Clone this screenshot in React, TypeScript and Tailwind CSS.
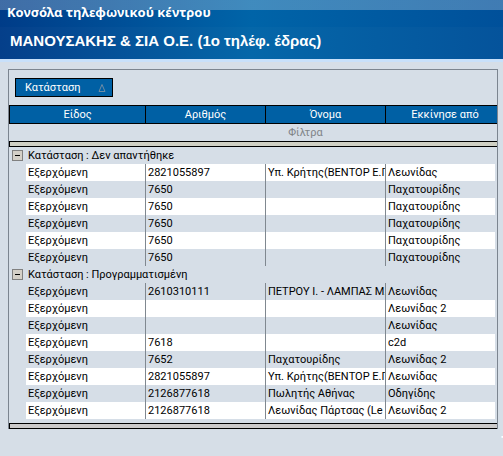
import React, { useState } from 'react'

interface Call {
  type: string;
  number: string;
  name: string;
  startedBy: string;
}

interface CallGroup {
  status: string;
  firstShaded: boolean;
  calls: Call[];
}

const call = (number: string, name: string, startedBy: string): Call => ({
  type: 'Εξερχόμενη',
  number,
  name,
  startedBy,
})

const groups: CallGroup[] = [
  {
    status: 'Δεν απαντήθηκε',
    firstShaded: false,
    calls: [
      call('2821055897', 'Υπ. Κρήτης(ΒΕΝΤΟΡ Ε.Γ', 'Λεωνίδας'),
      call('7650', '', 'Παχατουρίδης'),
      call('7650', '', 'Παχατουρίδης'),
      call('7650', '', 'Παχατουρίδης'),
      call('7650', '', 'Παχατουρίδης'),
      call('7650', '', 'Παχατουρίδης'),
    ],
  },
  {
    status: 'Προγραμματισμένη',
    firstShaded: true,
    calls: [
      call('2610310111', 'ΠΕΤΡΟΥ Ι. - ΛΑΜΠΑΣ Μ.', 'Λεωνίδας'),
      call('', '', 'Λεωνίδας 2'),
      call('', '', 'Λεωνίδας'),
      call('7618', '', 'c2d'),
      call('7652', 'Παχατουρίδης', 'Λεωνίδας 2'),
      call('2821055897', 'Υπ. Κρήτης(ΒΕΝΤΟΡ Ε.Γ', 'Λεωνίδας'),
      call('2126877618', 'Πωλητής Αθήνας', 'Οδηγίδης'),
      call('2126877618', 'Λεωνίδας Πάρτσας (Le', 'Λεωνίδας 2'),
    ],
  },
]

const Header = () => (
  <header className="border-b-3 border-[#c8e0fa] bg-linear-to-r from-[#003c88] via-[#0064a8] to-[#00509a] text-white whitespace-nowrap">
    <div className="h-[27px] bg-linear-to-b from-white/25 from-[10px] to-white/0 to-[10px] px-[7px] pt-1">
      <p className="font-['Noto_Sans',sans-serif] text-[13px] leading-4 font-bold">Κονσόλα τηλεφωνικού κέντρου</p>
    </div>
    <h1 className="h-8 bg-white/2 px-[10px] pt-1 font-['Liberation_Sans',Arial,sans-serif] text-[15px] leading-5 font-bold">ΜΑΝΟΥΣΑΚΗΣ &amp; ΣΙΑ Ο.Ε. (1ο τηλέφ. έδρας)</h1>
  </header>
)

const GroupRows = ({ group }: { group: CallGroup }) => {
  const [open, setOpen] = useState(true)
  return (
    <tbody>
      <tr className="h-[17px]">
        <td className="p-0 pl-[3px]">
          <button
            type="button"
            aria-expanded={open}
            aria-label={group.status}
            onClick={() => setOpen(!open)}
            className="flex size-[11px] items-center justify-center border border-[#808080] bg-[#d4d0c8]"
          >
            <svg viewBox="0 0 9 9" className="size-[9px]" shapeRendering="crispEdges">
              <path d={open ? 'M2 4h5v1H2z' : 'M2 4h5v1H2zM4 2h1v5H4z'} fill="#000" />
            </svg>
          </button>
        </td>
        <td colSpan={4} className="p-0 pl-[2px]">Κατάσταση : {group.status}</td>
      </tr>
      {open && group.calls.map((item, ind) => {
        const shaded = (ind % 2 === 0) === group.firstShaded
        const cell = `h-[17px] p-0 pl-[2px] overflow-hidden ${shaded ? '' : 'bg-white'}`
        return (
          <tr key={ind}>
            <td className="p-0" />
            <td className={`${cell} border-r border-[#808890]`}>{item.type}</td>
            <td className={`${cell} border-r border-[#808890]`}>{item.number}</td>
            <td className={`${cell} border-r border-[#808890]`}>{item.name}</td>
            <td className={`${cell} border-r-2 border-r-[#d6dee7]`}>{item.startedBy}</td>
          </tr>
        )
      })}
    </tbody>
  )
}

const App = () => {
  const head = 'h-[19px] border-y border-r border-black p-0 text-center font-normal'
  return (
    <div className="min-h-screen overflow-hidden bg-[#d6dee7] font-[Roboto,sans-serif] text-[11px] leading-[17px] text-black">
      <Header />
      <main className="mt-[7px] mr-[5px] ml-2 border border-b-0 border-[#7c8590]">
        <div className="px-[6px] pt-2 pb-2">
          <button type="button" className="flex h-[19px] w-[98px] items-center justify-between border border-black bg-[#0060a4] pr-[6px] pl-[9px] text-white">
            Κατάσταση
            <svg viewBox="0 0 8 8" className="size-2" fill="none">
              <path d="M4 .5 1 7.5h6z" stroke="#6f8ca4" />
            </svg>
          </button>
        </div>
        <table className="w-full table-fixed border-separate border-spacing-0 whitespace-nowrap">
          <colgroup>
            <col className="w-[17px]" />
            <col className="w-[120px]" />
            <col className="w-[120px]" />
            <col className="w-[120px]" />
            <col />
          </colgroup>
          <thead>
            <tr className="bg-[#0060a4] text-white">
              <th colSpan={2} className={`${head} border-l`}>Είδος</th>
              <th className={head}>Αριθμός</th>
              <th className={head}>Όνομα</th>
              <th className="h-[19px] border-y border-black p-0 pl-[7px] text-center font-normal">Εκκίνησε από</th>
            </tr>
            <tr>
              <td colSpan={5} className="h-[17px] p-0 pl-[105px] text-center text-[#808488]">Φίλτρα</td>
            </tr>
            <tr>
              <td colSpan={5} className="h-[6px] border-y border-l border-black bg-[#d0d0c4] p-0" />
            </tr>
          </thead>
          {groups.map((group) => (
            <GroupRows key={group.status} group={group} />
          ))}
        </table>
        <div className="mt-1 h-[6px] border-y border-l border-black bg-[#cccaca]" />
      </main>
      <footer className="-mr-2 flex justify-end pt-1 font-['Liberation_Sans',Arial,sans-serif] text-[16px] leading-5 font-bold text-white">Τ</footer>
    </div>
  )
}

export default App
